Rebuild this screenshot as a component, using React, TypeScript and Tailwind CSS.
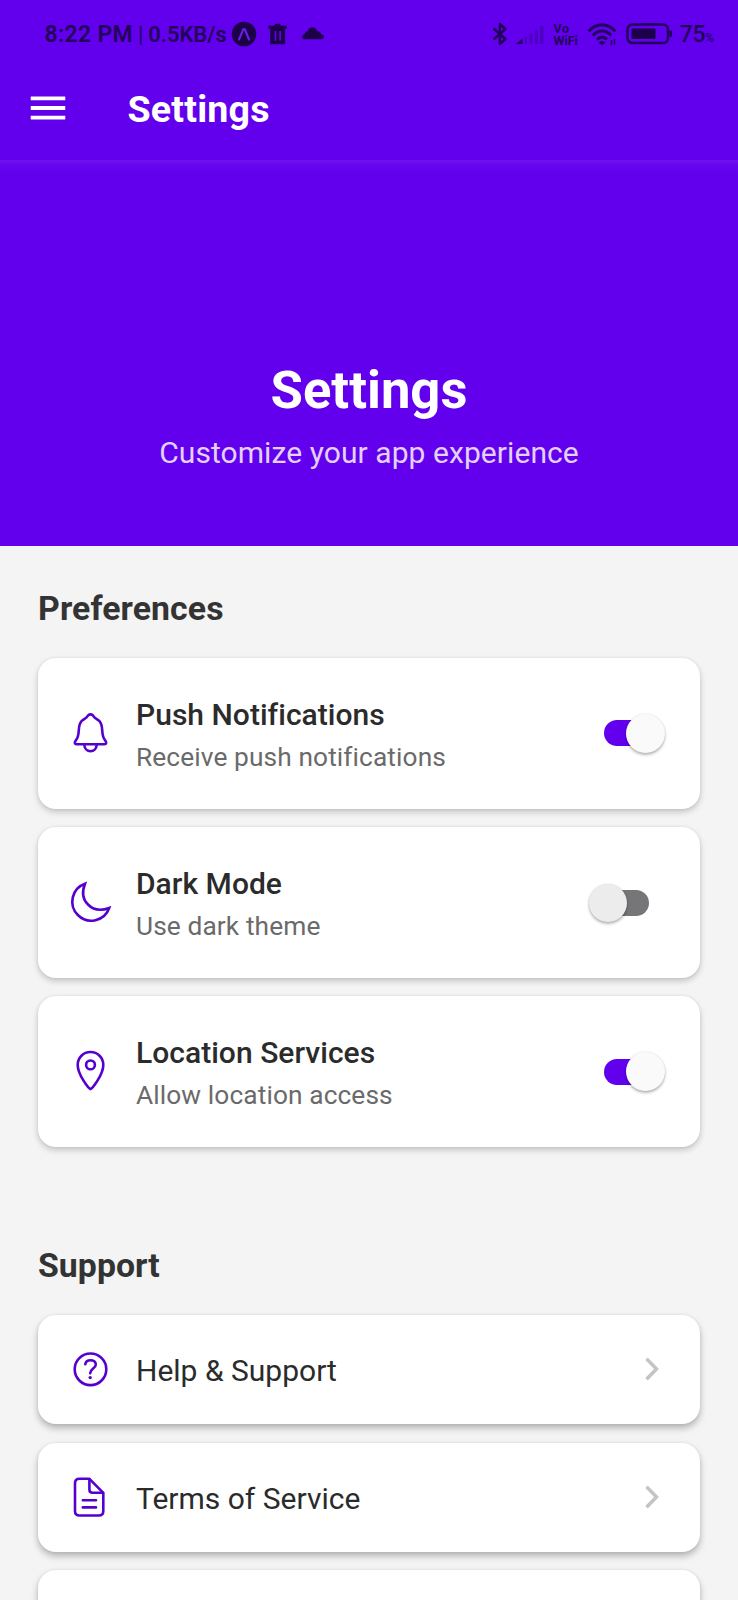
import type { ReactNode } from "react";
import { MdMenu } from "react-icons/md";

function Glyph({ children }: { children: ReactNode }) {
  return (
    <svg className="size-[45px] text-[#5600d0]" viewBox="0 0 45 45" fill="none" stroke="currentColor" strokeWidth="2.600" strokeLinecap="round">
      {children}
    </svg>
  );
}

function BellIcon() {
  return (
    <Glyph>
      <path strokeLinejoin="round" d="M20 4.500Q22.500 2.400 25 4.500C26 6.800 28 7.500 30 8.800C33.500 11 34 14.500 34.200 19C34.400 24 35 27 37.300 29.600C38.800 31.600 38.300 33.300 36.500 33.300H8.500C6.700 33.300 6.200 31.600 7.700 29.600C10 27 10.600 24 10.800 19C11 14.500 11.500 11 15 8.800C17 7.500 19 6.800 20 4.500z" />
      <path d="M16.300 33.800C16.500 37.500 19 40.200 22.500 40.200S28.500 37.500 28.700 33.800" />
    </Glyph>
  );
}

function MoonIcon() {
  return (
    <Glyph>
      <path strokeLinejoin="miter" d="M17 3.700A19 19 0 1 0 41.200 28C33 31 25 29.800 20 24.500C15.300 20 13.400 13 17 3.700z" />
    </Glyph>
  );
}

function PinIcon() {
  return (
    <Glyph>
      <path strokeLinejoin="round" d="M22.500 40.200C21 40.200 9.700 25.500 9.700 15.900C9.700 8.600 15.400 3 22.500 3S35.300 8.600 35.300 15.900C35.300 25.500 24 40.200 22.500 40.200z" />
      <circle cx="22.500" cy="15.900" r="4.400" />
    </Glyph>
  );
}

function HelpIcon() {
  return (
    <Glyph>
      <circle cx="22.500" cy="22.300" r="15.800" />
      <path d="M17.300 17.300C17.600 14.600 19.700 13.200 22.500 13.200C25.500 13.200 27.800 14.900 27.800 17.500C27.800 21.500 22.300 21.700 22.200 26.200" />
      <circle cx="22.200" cy="30.600" r="1.700" fill="currentColor" stroke="none" />
    </Glyph>
  );
}

function DocumentIcon() {
  return (
    <Glyph>
      <path strokeLinejoin="round" d="M21.200 3.700H11.500Q7 3.700 7 8.200V36Q7 40.500 11.500 40.500H30.800Q35.300 40.500 35.300 36V17.800z" />
      <path strokeLinejoin="round" d="M21.400 4.200V14.500Q21.400 17.800 24.700 17.800H35M14.800 25.200H28M14.800 32.400H28" />
    </Glyph>
  );
}

function StatusBar() {
  return (
    <div className="flex h-[68px] items-center pl-[44.500px] pr-[24px] text-[#22005a]">
      <span className="text-[23px] leading-[27px] font-semibold tracking-[0.300px] whitespace-pre">8:22 PM</span>
      <span className="ml-[5px] text-[22px] leading-[27px] font-medium">|</span>
      <span className="ml-[5px] text-[22px] leading-[27px] font-semibold tracking-[-0.1px]">0.5KB/s</span>
      <div className="flex flex-1 items-center pl-[4px]">
        <svg className="size-[26px]" viewBox="0 0 26 26">
          <circle cx="13" cy="13" r="12.300" fill="#1c0048" />
          <path d="M8 18.500L12.300 8.300h1.600L18 18.500" fill="none" stroke="#6a1fe8" strokeWidth="2.100" strokeLinejoin="round" strokeLinecap="round" />
        </svg>
        <svg className="ml-[10px] size-[22px]" viewBox="0 0 22 22">
          <path fill="#1c0048" fillRule="evenodd" d="M1.500 2.800h5.500l1.600-2h4l1.600 2h5.500v3h-1.600v15.400H3.200V5.800H1.500z M7.600 8v9.800h1.700V8z M12.300 8v9.800h1.700V8z" />
        </svg>
        <svg className="ml-[12px] mb-[2px] h-[14px] w-[24px]" viewBox="0 0 24 14">
          <path fill="#1c0048" d="M3.500 13.200C.4 13.200.2 9 3.400 8.300 4 5.800 5.500 5.400 6.600 5.400 7.600 0 14.800-.2 16.200 5c2.300-.1 3.400 1.200 3.700 3.300 4 .5 3.900 4.900.6 4.900z" />
        </svg>
      </div>
      <div className="flex items-center">
        <svg className="h-[24px] w-[16px]" viewBox="0 0 16 24" fill="none" stroke="#22005a" strokeWidth="2.400" strokeLinejoin="round">
          <path d="M1.500 6.500L13.500 17L7.800 22V2L13.500 7L1.500 17.500" />
        </svg>
        <svg className="ml-[7px] mt-[2px] h-[20px] w-[30px]" viewBox="0 0 30 20" fill="#22005a">
          <path d="M1 19L7.500 13.500v5.500z" />
          <g opacity="0.3">
            <rect x="9.500" y="12" width="2.500" height="7" />
            <rect x="14.500" y="8.500" width="3" height="10.500" />
            <rect x="20" y="5" width="3" height="14" />
            <rect x="25" y="1" width="3.500" height="18" />
          </g>
        </svg>
        <div className="ml-[8px] mt-[1px] flex w-[27px] flex-col text-[12.500px] leading-[12px] font-bold">
          <span className="tracking-[0.6px]">Vo</span>
          <span>WiFi</span>
        </div>
        <svg className="ml-[7px] mt-[2px] h-[24px] w-[30px]" viewBox="0 0 30 24">
          <g fill="none" stroke="#22005a" strokeWidth="2.900">
            <path d="M1.500 8.200C9.500-.5 20.500-.5 28.500 8.200" />
            <path d="M5.800 12.500C11.500 6.500 18.500 6.500 24.200 12.500" />
            <path d="M10 16.500C13.500 13.200 16.500 13.200 20 16.500" />
          </g>
          <path d="M11.500 19.500q3.500-3 7 0L15 22.500z" fill="#22005a" />
          <path d="M24.500 17v5.500M27.500 16v5.500" stroke="#22005a" strokeWidth="1.500" />
        </svg>
        <svg className="ml-[9px] h-[22px] w-[47px]" viewBox="0 0 47 22">
          <rect x="1.500" y="1.500" width="40.500" height="18.500" rx="5" fill="none" stroke="#22005a" strokeWidth="2.600" />
          <rect x="5.500" y="5.500" width="24" height="10.500" rx="1" fill="#1c0048" />
          <rect x="43.500" y="7.500" width="2.500" height="6.500" rx="1.200" fill="#22005a" />
        </svg>
        <div className="ml-[6px] flex items-baseline font-medium">
          <span className="text-[23.500px] leading-[27px] tracking-[-0.500px]">75</span>
          <span className="text-[12px]">%</span>
        </div>
      </div>
    </div>
  );
}

function Toggle({ on }: { on: boolean }) {
  return on ? (
    <div className="relative mr-[36px] h-[40px] w-[60.500px]">
      <div className="absolute top-[7px] left-0 h-[26px] w-[46px] rounded-full bg-[#6200ee]" />
      <div className="absolute top-[0.500px] left-[22px] size-[39px] rounded-full bg-[#fafafa] shadow-[0_2px_3px_rgba(0,0,0,0.28),0_0_2px_rgba(0,0,0,0.12)]" />
    </div>
  ) : (
    <div className="relative mr-[51px] h-[40px] w-[60px]">
      <div className="absolute top-[7.500px] right-0 h-[26px] w-[46px] rounded-full bg-[#767577]" />
      <div className="absolute top-[1.500px] left-0 size-[38px] rounded-full bg-[#ececec] shadow-[0_2px_3px_rgba(0,0,0,0.28),0_0_2px_rgba(0,0,0,0.12)]" />
    </div>
  );
}

function PreferenceCard({ icon, title, subtitle, on }: { icon: ReactNode; title: string; subtitle: string; on: boolean }) {
  return (
    <div className="flex h-[150.500px] items-center rounded-[18px] bg-white pl-[29.500px] shadow-[0_3px_6px_rgba(0,0,0,0.2),0_0_3px_rgba(0,0,0,0.07)]">
      {icon}
      <div className="ml-[23.500px] flex flex-1 flex-col gap-[8px] pt-[3px]">
        <span className="text-[30px] leading-[36px] font-medium tracking-[0.030px] text-[#2b2b2b]">{title}</span>
        <span className="text-[26.300px] leading-[32px] tracking-[0.100px] text-[#6a6a6a]">{subtitle}</span>
      </div>
      <Toggle on={on} />
    </div>
  );
}

function LinkCard({ icon, title }: { icon?: ReactNode; title?: string }) {
  return (
    <div className="flex h-[109px] shrink-0 items-center rounded-[18px] bg-white pl-[29.500px] pr-[41px] shadow-[0_4px_7px_rgba(0,0,0,0.27),0_0_3px_rgba(0,0,0,0.07)]">
      {icon}
      {title && (
        <>
          <span className="ml-[23.500px] flex-1 pt-[3px] text-[30px] leading-[36px] text-[#2b2b2b]">{title}</span>
          <svg className="h-[24px] w-[14px]" viewBox="0 0 14 24" fill="none" stroke="#c4c4c4" strokeWidth="3.500">
            <path d="M1.500 1.700L11.500 12L1.500 22.300" />
          </svg>
        </>
      )}
    </div>
  );
}

export default function App() {
  return (
    <div className="flex h-[1600px] w-[738px] flex-col overflow-hidden bg-[#f4f4f4] font-['Roboto',sans-serif]">
      <header className="h-[160px] shrink-0 bg-[#6200ee]">
        <StatusBar />
        <div className="flex items-start pl-[25px]">
          <MdMenu className="mt-[16.500px] size-[46px] text-white" />
          <h1 className="ml-[56.500px] mt-[19px] text-[37.600px] leading-[44px] font-bold tracking-[0.200px] text-white">Settings</h1>
        </div>
      </header>
      <section className="flex h-[386px] shrink-0 flex-col items-center bg-[linear-gradient(#7012f0,#6606ee_5px,#6200ee_14px)] pt-[199px]">
        <h2 className="text-[52.600px] leading-[62px] font-bold text-white">Settings</h2>
        <p className="mt-[14px] text-[30px] leading-[36px] tracking-[0.070px] text-[#e3d0fb]">Customize your app experience</p>
      </section>
      <main className="flex flex-col px-[38px] pt-[43px]">
        <h3 className="text-[33.800px] leading-[40px] font-bold tracking-[0.100px] text-[#333333]">Preferences</h3>
        <div className="mt-[29px] flex flex-col gap-[18.700px]">
          <PreferenceCard icon={<BellIcon />} title="Push Notifications" subtitle="Receive push notifications" on />
          <PreferenceCard icon={<MoonIcon />} title="Dark Mode" subtitle="Use dark theme" on={false} />
          <PreferenceCard icon={<PinIcon />} title="Location Services" subtitle="Allow location access" on />
        </div>
        <h3 className="mt-[99px] text-[33.800px] leading-[40px] font-bold tracking-[0.050px] text-[#333333]">Support</h3>
        <div className="mt-[29px] flex flex-col gap-[18.700px]">
          <LinkCard icon={<HelpIcon />} title="Help & Support" />
          <LinkCard icon={<DocumentIcon />} title="Terms of Service" />
          <LinkCard />
        </div>
      </main>
    </div>
  );
}
